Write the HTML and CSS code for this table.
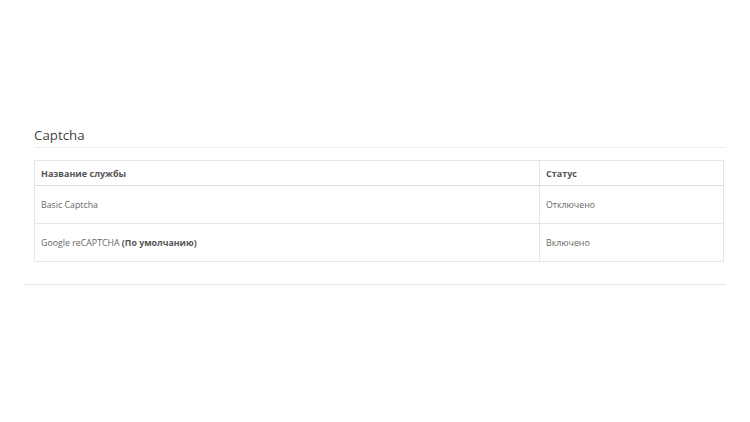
FILE: index.html
```html
<!DOCTYPE html>
<html>
<head>
<meta charset="utf-8">
<link rel="stylesheet" href="styles.css">
</head>
<body>
<div class="page">
  <section class="panel">
    <h2 class="title">Captcha</h2>
    <table class="grid">
      <thead>
        <tr><th class="c-name">Название службы</th><th class="c-status">Статус</th></tr>
      </thead>
      <tbody>
        <tr><td>Basic Captcha</td><td>Отключено</td></tr>
        <tr><td>Google reCAPTCHA <b>(По умолчанию)</b></td><td>Включено</td></tr>
      </tbody>
    </table>
  </section>
</div>
</body>
</html>
```
FILE: styles.css
```css
html, body { margin: 0; padding: 0; background: #fff; }
body { font-family: "Open Sans", "Liberation Sans", sans-serif; color: #555; }
.page { padding: 124px 24px 0 24px; }
.panel { padding: 0 0 22px 10px; border-bottom: 1px solid #e8e8e8; width: 692px; }
.title { margin: 0; font-weight: 400; font-size: 13.3px; line-height: 22px; color: #444; border-bottom: 1px solid #eee; height: 24px; box-sizing: border-box; }
.grid { margin-top: 12px; width: 690px; border-collapse: collapse; font-size: 8.8px; border: 1px solid #e6e6e6; }
.grid th, .grid td { text-align: left; padding: 0 6px; border-left: 1px solid #e6e6e6; }
.grid th { font-weight: 700; font-size: 9px; height: 24px; border-bottom: 1px solid #ddd; color: #555; }
.grid td { height: 37px; border-top: 1px solid #e6e6e6; color: #666; }
.grid td b { color: #555; }
.c-name { width: 492px; }
```
